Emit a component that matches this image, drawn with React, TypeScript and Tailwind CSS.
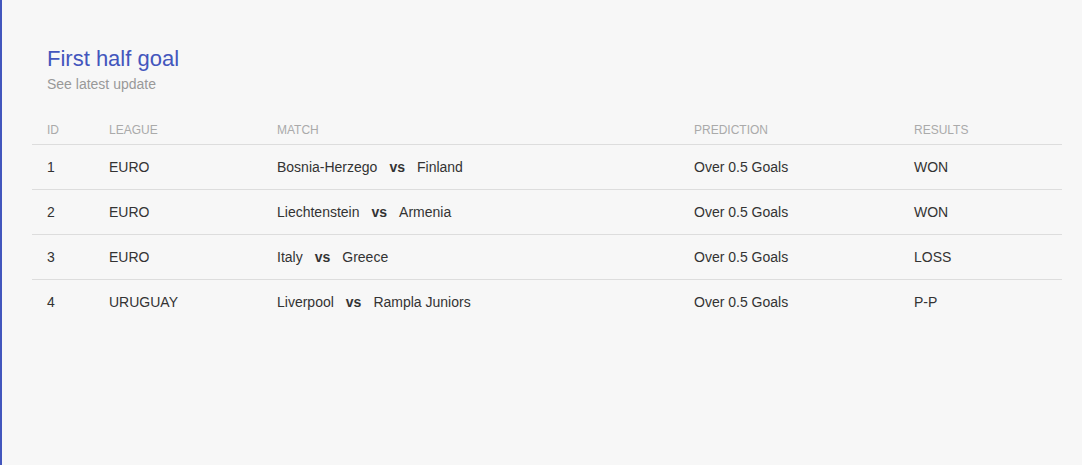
const rows = [
  { id: 1, league: 'EURO', home: 'Bosnia-Herzego', away: 'Finland', prediction: 'Over 0.5 Goals', result: 'WON' },
  { id: 2, league: 'EURO', home: 'Liechtenstein', away: 'Armenia', prediction: 'Over 0.5 Goals', result: 'WON' },
  { id: 3, league: 'EURO', home: 'Italy', away: 'Greece', prediction: 'Over 0.5 Goals', result: 'LOSS' },
  { id: 4, league: 'URUGUAY', home: 'Liverpool', away: 'Rampla Juniors', prediction: 'Over 0.5 Goals', result: 'P-P' },
];

const cols = 'grid grid-cols-[62px_168px_417px_220px_1fr]';

export default function App() {
  return (
    <div className="h-[465px] border-l-2 border-[#4356bd] bg-[#f7f7f7] pl-[30px] pr-[20px] pt-[46px] font-['Liberation_Sans',Arial,sans-serif]">
      <div className="pl-[15px]">
        <h4 className="text-[22px] leading-[26px] text-[#4356bd]">First half goal</h4>
        <p className="mt-[2px] text-sm leading-5 text-[#999]">See latest update</p>
      </div>

      <div className="mt-[28px]">
        <div className={`${cols} border-b border-[#ddd] pb-[6px] text-xs leading-4 text-[#aaa]`}>
          <div className="pl-[15px]">ID</div>
          <div className="pl-[15px]">LEAGUE</div>
          <div className="pl-[15px]">MATCH</div>
          <div className="pl-[15px]">PREDICTION</div>
          <div className="pl-[15px]">RESULTS</div>
        </div>
        {rows.map((r, i) => (
          <div
            key={r.id}
            className={`${cols} py-3 text-sm leading-5 text-[#333] ${i < rows.length - 1 ? 'border-b border-[#ddd]' : ''}`}
          >
            <div className="pl-[15px]">{r.id}</div>
            <div className="pl-[15px]">{r.league}</div>
            <div className="pl-[15px]">
              {r.home}
              <b className="mx-[12px] font-bold">vs</b>
              {r.away}
            </div>
            <div className="pl-[15px]">{r.prediction}</div>
            <div className="pl-[15px]">{r.result}</div>
          </div>
        ))}
      </div>
    </div>
  );
}
